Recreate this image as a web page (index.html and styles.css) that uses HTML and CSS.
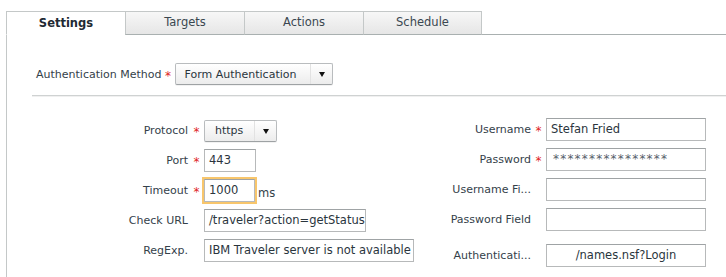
FILE: index.html
```html
<!DOCTYPE html>
<html>
<head>
<meta charset="utf-8">
<link rel="stylesheet" href="styles.css">
</head>
<body>
<div class="tabs">
  <div class="tab active">Settings</div>
  <div class="tab">Targets</div>
  <div class="tab">Actions</div>
  <div class="tab last">Schedule</div>
  <div class="tab-fill"></div>
</div>
<div class="panel">
  <div class="auth-row">
    <span class="auth-label">Authentication Method</span>
    <span class="req">*</span>
    <div class="select auth-select"><span class="sel-text">Form Authentication</span><span class="sel-arrow"></span></div>
  </div>
  <div class="sep"></div>
  <div class="form">
    <div class="col left">
      <div class="row"><span class="lbl">Protocol</span><span class="req">*</span><div class="select proto-select"><span class="sel-text">https</span><span class="sel-arrow"></span></div></div>
      <div class="row"><span class="lbl">Port</span><span class="req">*</span><div class="input w-port">443</div></div>
      <div class="row"><span class="lbl">Timeout</span><span class="req">*</span><div class="focus"><div class="input w-time">1000</div></div><span class="unit">ms</span></div>
      <div class="row"><span class="lbl">Check URL</span><span class="req"></span><div class="input w-url">/traveler?action=getStatus</div></div>
      <div class="row"><span class="lbl">RegExp.</span><span class="req"></span><div class="input w-re">IBM Traveler server is not available</div></div>
    </div>
    <div class="col right">
      <div class="row"><span class="lbl">Username</span><span class="req">*</span><div class="input w-r">Stefan Fried</div></div>
      <div class="row"><span class="lbl">Password</span><span class="req">*</span><div class="input w-r pw">****************</div></div>
      <div class="row"><span class="lbl">Username Fi...</span><span class="req"></span><div class="input w-r"></div></div>
      <div class="row"><span class="lbl">Password Field</span><span class="req"></span><div class="input w-r"></div></div>
      <div class="row last-row"><span class="lbl">Authenticati...</span><span class="req"></span><div class="input w-r center">/names.nsf?Login</div></div>
    </div>
  </div>
</div>
</body>
</html>
```
FILE: styles.css
```css
* { box-sizing: border-box; }
html, body { margin: 0; padding: 0; background: #fff; }
body {
  font-family: "DejaVu Sans", Verdana, sans-serif;
  font-size: 11px;
  color: #34414a;
  width: 726px;
  height: 277px;
  overflow: hidden;
}
.tabs {
  display: flex;
  padding-top: 11px;
  padding-left: 6px;
  height: 35px;
}
.tab {
  width: 119px;
  height: 24px;
  border: 1px solid #c4c8c8;
  border-right: none;
  border-bottom: 1px solid #a9b0b0;
  background: linear-gradient(#f7f7f7, #e6e6e6);
  text-align: center;
  line-height: 20px;
  color: #3a4750;
  font-size: 11.5px;
}
.tab.last { border-right: 1px solid #c4c8c8; width: 119px; }
.tab.active {
  background: #fff;
  border-bottom-color: #fff;
  font-weight: bold;
  color: #1f2a33;
  line-height: 23px;
}
.tab-fill {
  flex: 1;
  height: 24px;
  border-bottom: 1px solid #a9b0b0;
}
.panel {
  margin-left: 6px;
  border-left: 1px solid #c4c8c8;
  height: 242px;
  padding-top: 28px;
}
.auth-row {
  display: flex;
  align-items: center;
  height: 22px;
  padding-left: 29px;
}
.req {
  color: #e02424;
  width: 15px;
  text-align: center;
  font-size: 12px;
  line-height: 10px;
  padding-top: 3px;
  align-self: center;
}
.auth-row .req { width: 13px; }
.select {
  display: flex;
  align-items: center;
  height: 22px;
  border: 1px solid #b9bcbe;
  border-bottom-color: #9ea2a4;
  border-radius: 2px;
  background: linear-gradient(#ffffff, #ececec);
  color: #2a353d;
  box-shadow: 0 1px 0 rgba(0,0,0,0.05);
}
.sel-text {
  flex: 1;
  padding-left: 9px;
  white-space: nowrap;
}
.sel-arrow {
  width: 22px;
  height: 100%;
  border-left: 1px solid #e2e2e2;
  position: relative;
}
.sel-arrow::after {
  content: "";
  position: absolute;
  left: 8px;
  top: 8px;
  border-left: 3.5px solid transparent;
  border-right: 3.5px solid transparent;
  border-top: 5px solid #111;
}
.auth-select { width: 158px; }
.proto-select { width: 73px; }
.proto-select .sel-text { padding-left: 10px; }
.sep {
  margin-top: 10px;
  margin-left: 25px;
  height: 2px;
  border-top: 1px solid #cfd2d2;
  border-bottom: 1px solid #f0f0f0;
}
.form {
  display: flex;
  padding-top: 22px;
}
.col {
  display: flex;
  flex-direction: column;
  gap: 7px;
}
.row {
  display: flex;
  align-items: center;
  height: 23px;
}
.left { width: 407px; }
.left .lbl { width: 182px; text-align: right; padding-right: 1px; }
.right .lbl { width: 117px; text-align: right; padding-right: 0; white-space: nowrap; }
.right .row:first-child { margin-top: -1px; }
.input {
  height: 23px;
  border: 1px solid #b7b9ba;
  border-top-color: #9fa3a5;
  background: #fff;
  padding-left: 4px;
  line-height: 21px;
  white-space: nowrap;
  overflow: hidden;
  color: #2a353d;
  font-size: 11.5px;
}
.focus {
  border: 2px solid #f8c66c;
  margin: -2px;
}
.unit { margin-left: 3px; padding-top: 4px; font-size: 11.5px; }
.w-port { width: 52px; }
.w-time { width: 51px; }
.w-url { width: 162px; }
.w-re { width: 210px; }
.w-r { width: 160px; }
.pw { color: #56606a; letter-spacing: 1.2px; font-size: 12px; padding-left: 6px; }
.center { text-align: center; padding-left: 0; }
.last-row { margin-top: 6px; }
```
